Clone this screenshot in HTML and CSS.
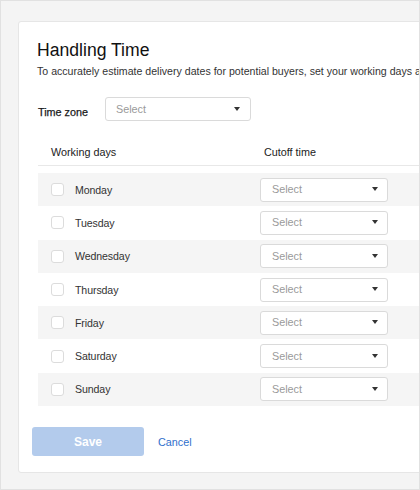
FILE: index.html
```html
<!DOCTYPE html>
<html>
<head>
<meta charset="utf-8">
<link rel="stylesheet" href="styles.css">
</head>
<body>
<div class="frame">
  <div class="card">
    <h1 class="title">Handling Time</h1>
    <p class="subtitle">To accurately estimate delivery dates for potential buyers, set your working days and cutoff times.</p>
    <div class="tz-row">
      <span class="tz-label">Time zone</span>
      <div class="select tz-select"><span>Select</span><i class="caret"></i></div>
    </div>
    <div class="table">
      <div class="thead">
        <div class="col-day">Working days</div>
        <div class="col-cut">Cutoff time</div>
      </div>
      <div class="rows">
        <div class="row alt"><div class="col-day"><span class="check"></span><span>Monday</span></div><div class="select row-select"><span>Select</span><i class="caret"></i></div></div>
        <div class="row"><div class="col-day"><span class="check"></span><span>Tuesday</span></div><div class="select row-select"><span>Select</span><i class="caret"></i></div></div>
        <div class="row alt"><div class="col-day"><span class="check"></span><span>Wednesday</span></div><div class="select row-select"><span>Select</span><i class="caret"></i></div></div>
        <div class="row"><div class="col-day"><span class="check"></span><span>Thursday</span></div><div class="select row-select"><span>Select</span><i class="caret"></i></div></div>
        <div class="row alt"><div class="col-day"><span class="check"></span><span>Friday</span></div><div class="select row-select"><span>Select</span><i class="caret"></i></div></div>
        <div class="row"><div class="col-day"><span class="check"></span><span>Saturday</span></div><div class="select row-select"><span>Select</span><i class="caret"></i></div></div>
        <div class="row alt"><div class="col-day"><span class="check"></span><span>Sunday</span></div><div class="select row-select"><span>Select</span><i class="caret"></i></div></div>
      </div>
    </div>
    <div class="actions">
      <button class="save">Save</button>
      <a class="cancel">Cancel</a>
    </div>
  </div>
</div>
</body>
</html>
```
FILE: styles.css
```css
* { box-sizing: border-box; }
html, body { margin: 0; padding: 0; }
body {
  font-family: "Liberation Sans", Arial, sans-serif;
  color: #333;
}
.frame {
  width: 420px;
  height: 490px;
  border: 1px solid #e1e1e1;
  background: #f4f4f4;
  padding: 20px 0 0 17px;
  overflow: hidden;
  display: flex;
  align-items: flex-start;
}
.card {
  flex-shrink: 0;
  width: 470px;
  height: 452px;
  background: #fff;
  border: 1px solid #e6e6e6;
  border-radius: 3px;
  padding: 17px 0 0 18px;
}
.title {
  margin: 0;
  font-size: 17.6px;
  line-height: 22px;
  font-weight: normal;
  color: #111;
}
.subtitle {
  margin: 3px 0 0;
  font-size: 10.6px;
  line-height: 14px;
  white-space: nowrap;
  color: #333;
}
.tz-row {
  margin-top: 19px;
  margin-left: 1px;
  display: flex;
  align-items: center;
  height: 24px;
}
.tz-label {
  width: 67px;
  font-size: 10.8px;
  color: #1a1a1a;
  margin-top: 5px;
  -webkit-text-stroke: 0.25px #1a1a1a;
}
.select {
  display: flex;
  align-items: center;
  justify-content: space-between;
  height: 24px;
  border: 1px solid #dadada;
  border-radius: 3px;
  background: #fff;
  font-size: 10.8px;
  color: #9a9a9a;
}
.tz-select {
  width: 146px;
  padding: 0 10px 1px 10px;
}
.caret {
  display: block;
  width: 0;
  height: 0;
  border-left: 3px solid transparent;
  border-right: 3px solid transparent;
  border-top: 4px solid #333;
}
.table {
  margin-left: 1px;
  width: 440px;
}
.thead {
  margin-top: 23px;
  display: flex;
  font-size: 10.8px;
  line-height: 14px;
  padding-bottom: 6px;
  border-bottom: 1px solid #e8e8e8;
  color: #222;
}
.col-day {
  width: 222px;
  padding-left: 13px;
  display: flex;
  align-items: center;
}
.col-cut {
  padding-left: 4px;
  padding-top: 1px;
}
.rows {
  margin-top: 7px;
}
.row {
  height: 33.3px;
  display: flex;
  align-items: center;
  font-size: 10.6px;
  letter-spacing: -0.1px;
  color: #333;
}
.row.alt {
  background: #f5f5f5;
}
.check {
  width: 13px;
  height: 13px;
  border: 1px solid #dcdcdc;
  border-radius: 3px;
  background: #fff;
  margin-right: 11px;
}
.row-select {
  width: 128px;
  padding: 0 9px 1px 11px;
  letter-spacing: 0;
}
.actions {
  margin-top: 21px;
  margin-left: -5px;
  display: flex;
  align-items: center;
}
.save {
  width: 112px;
  height: 29px;
  border: none;
  border-radius: 3px;
  background: #b3cbec;
  color: #fff;
  font-family: "Liberation Sans", Arial, sans-serif;
  font-size: 12px;
  font-weight: bold;
  padding: 0;
}
.cancel {
  margin-left: 14px;
  margin-top: 1px;
  font-size: 10.8px;
  color: #2f6fcc;
}
```
